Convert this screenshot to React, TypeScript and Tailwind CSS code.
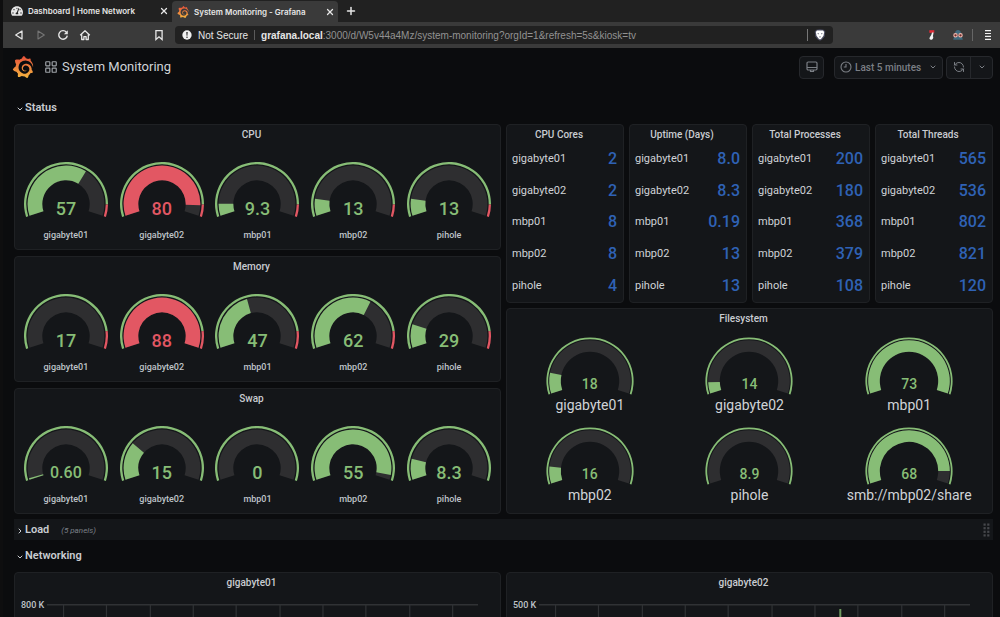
import React from "react";
import { ChevronDown, ChevronRight, LayoutGrid, Plus, RefreshCcw, X } from "lucide-react";
import { SiGrafana } from "react-icons/si";
import { FaTachometerAlt } from "react-icons/fa";

const GREEN = "#87bd76";
const RED = "#e25763";
const TRACK = "#2e2e30";

type GaugeItem = { name: string; value: string; fill: number; hot?: boolean };

const cpu: GaugeItem[] = [
  { name: "gigabyte01", value: "57", fill: 0.645 },
  { name: "gigabyte02", value: "80", fill: 0.925, hot: true },
  { name: "mbp01", value: "9.3", fill: 0.085 },
  { name: "mbp02", value: "13", fill: 0.12 },
  { name: "pihole", value: "13", fill: 0.12 },
];

const memory: GaugeItem[] = [
  { name: "gigabyte01", value: "17", fill: 0 },
  { name: "gigabyte02", value: "88", fill: 1, hot: true },
  { name: "mbp01", value: "47", fill: 0.43 },
  { name: "mbp02", value: "62", fill: 0.625 },
  { name: "pihole", value: "29", fill: 0.165 },
];

const swap: GaugeItem[] = [
  { name: "gigabyte01", value: "0.60", fill: 0.012 },
  { name: "gigabyte02", value: "15", fill: 0.27 },
  { name: "mbp01", value: "0", fill: 0 },
  { name: "mbp02", value: "55", fill: 0.965 },
  { name: "pihole", value: "8.3", fill: 0.148 },
];

const filesystem: GaugeItem[] = [
  { name: "gigabyte01", value: "18", fill: 0.138 },
  { name: "gigabyte02", value: "14", fill: 0.075 },
  { name: "mbp01", value: "73", fill: 1 },
  { name: "mbp02", value: "16", fill: 0.112 },
  { name: "pihole", value: "8.9", fill: 0 },
  { name: "smb://mbp02/share", value: "68", fill: 0.917 },
];

const hosts = ["gigabyte01", "gigabyte02", "mbp01", "mbp02", "pihole"];

const stats = [
  { title: "CPU Cores", values: ["2", "2", "8", "8", "4"] },
  { title: "Uptime (Days)", values: ["8.0", "8.3", "0.19", "13", "13"] },
  { title: "Total Processes", values: ["200", "180", "368", "379", "108"] },
  { title: "Total Threads", values: ["565", "536", "802", "821", "120"] },
];

function band(c: number, outer: number, inner: number, from: number, to: number) {
  const point = (r: number, t: number) => {
    const a = ((162 + 216 * t) * Math.PI) / 180;
    return `${(c + r * Math.cos(a)).toFixed(2)} ${(c + r * Math.sin(a)).toFixed(2)}`;
  };
  const large = (to - from) * 216 > 180 ? 1 : 0;
  return `M${point(outer, from)} A${outer} ${outer} 0 ${large} 1 ${point(outer, to)} L${point(inner, to)} A${inner} ${inner} 0 ${large} 0 ${point(inner, from)} Z`;
}

function Dial({ item, limit }: { item: GaugeItem; limit: number }) {
  return (
    <svg viewBox="0 0 84 56" className="col-start-1 row-start-1 h-14 w-21" aria-hidden="true">
      <path d={band(42, 42, 39.7, 0, limit)} fill={GREEN} />
      {limit < 1 && <path d={band(42, 42, 39.7, limit, 1)} fill={RED} />}
      <path d={band(42, 38.4, 23.7, 0, 1)} fill={TRACK} />
      {item.fill > 0 && <path d={band(42, 38.4, 23.7, 0, item.fill)} fill={item.hot ? RED : GREEN} />}
    </svg>
  );
}

function Panel({ title, className = "", children }: { title: string; className?: string; children: React.ReactNode }) {
  return (
    <section className={`flex min-w-0 flex-col rounded-sm border border-[#1f2124] bg-[#141619] ${className}`}>
      <h2 className="pt-px pr-3 text-center text-[10px] leading-[18px] font-medium text-[#c9ccd1]">{title}</h2>
      {children}
    </section>
  );
}

function GaugeRow({ title, items, limit }: { title: string; items: GaugeItem[]; limit: number }) {
  return (
    <Panel title={title} className="flex-1">
      <ul className="grid grid-cols-5 px-[3px] pt-[18px] pb-2">
        {items.map((item) => (
          <li key={item.name} className="flex flex-col items-center gap-[11px]">
            <div className="grid justify-items-center">
              <Dial item={item} limit={limit} />
              <span
                className={`col-start-1 row-start-1 self-end font-medium ${item.value.length > 3 ? "text-base/[18px]" : "text-lg/[18px]"} ${item.hot ? "text-[#e25763]" : "text-[#87bd76]"}`}
              >
                {item.value}
              </span>
            </div>
            <span className="text-[9px] leading-3 font-medium text-[#bfc3c8]">{item.name}</span>
          </li>
        ))}
      </ul>
    </Panel>
  );
}

function StatPanel({ title, values }: { title: string; values: string[] }) {
  return (
    <Panel title={title}>
      <dl className="-mt-px flex flex-1 flex-col pr-1.5 pl-[5px]">
        {hosts.map((host, i) => (
          <div key={host} className="flex flex-1 items-center justify-between">
            <dt className="text-[11px] leading-4 text-[#d0d3d7]">{host}</dt>
            <dd className="text-base leading-4 font-medium text-[#2f62b5]">{values[i]}</dd>
          </div>
        ))}
      </dl>
    </Panel>
  );
}

function Filesystem() {
  return (
    <Panel title="Filesystem">
      <ul className="grid grid-cols-3 gap-y-3.5 px-[3px] pt-[9px] pb-2.5">
        {filesystem.map((item) => (
          <li key={item.name} className="flex flex-col items-center gap-0.5">
            <div className="grid justify-items-center">
              <svg viewBox="0 0 88 58" className="col-start-1 row-start-1 h-[58px] w-[88px]" aria-hidden="true">
                <path d={band(44, 43.6, 41.8, 0, 1)} fill={GREEN} />
                <path d={band(44, 40.8, 29.2, 0, 1)} fill={TRACK} />
                {item.fill > 0 && <path d={band(44, 40.8, 29.2, 0, item.fill)} fill={GREEN} />}
              </svg>
              <span className="col-start-1 row-start-1 self-end pb-1 text-sm leading-none font-medium text-[#87bd76]">
                {item.value}
              </span>
            </div>
            <span className="text-sm leading-4 text-[#d0d3d7]">{item.name}</span>
          </li>
        ))}
      </ul>
    </Panel>
  );
}

function NetworkPanel({ title, top, spike }: { title: string; top: string; spike?: boolean }) {
  const lines = [16, 59, 103, 146, 189, 233, 276, 319, 363, 406];
  return (
    <Panel title={title}>
      <div className="flex pt-2 pr-[22px] pl-1.5">
        <span className="w-[26px] text-[9px] leading-[10px] font-medium text-[#bfc3c8]">{top}</span>
        <svg viewBox="0 0 432 120" preserveAspectRatio="none" className="mt-1 h-30 min-w-0 flex-1" aria-hidden="true">
          <rect width="432" height="1.5" fill="#303235" />
          {lines.map((x) => (
            <rect key={x} x={x} width="1.2" height="120" fill="#303235" />
          ))}
          {spike && <rect x="301" y="5" width="2" height="115" fill="#6f9a60" />}
        </svg>
      </div>
    </Panel>
  );
}

function RowTitle({ title, open, children }: { title: string; open: boolean; children?: React.ReactNode }) {
  const Chevron = open ? ChevronDown : ChevronRight;
  return (
    <div className={`flex h-[21px] items-center justify-between pr-[3px] pl-0.5 ${open ? "mb-1.5" : "mb-[5px] bg-[#141619]"}`}>
      <button type="button" aria-expanded={open} className="flex items-center gap-px pt-0.5 text-[11px] font-semibold text-[#c9ccd1]">
        <Chevron className="size-2" strokeWidth={3} />
        {title}
        {!open && <span className="ml-[11px] text-[8px] font-normal text-[#7b8087] italic">(5 panels)</span>}
      </button>
      {children}
    </div>
  );
}

function GrafanaMark({ className, id }: { className: string; id: string }) {
  return (
    <>
      <svg className="absolute size-0" aria-hidden="true">
        <linearGradient id={id} x1="0" y1="0" x2="0" y2="1">
          <stop offset="0" stopColor="#e8503a" />
          <stop offset="1" stopColor="#f4b53f" />
        </linearGradient>
      </svg>
      <SiGrafana className={className} fill={`url(#${id})`} />
    </>
  );
}

function BrowserChrome() {
  return (
    <header className="font-[Inter,sans-serif] text-[#e6e6e6]">
      <div className="flex h-[22px] bg-[#212121] text-[8px] font-semibold">
        <div className="flex w-[169px] items-center pr-[3px] pl-2">
          <FaTachometerAlt className="size-3" />
          <span className="ml-[5px] flex-1 whitespace-nowrap">Dashboard | Home Network</span>
          <button type="button" aria-label="Close Dashboard tab">
            <X className="size-2.5" strokeWidth={3} />
          </button>
        </div>
        <div className="mt-px flex w-[166px] items-center rounded-t bg-[#3a3a3a] pr-[3px] pl-[5px]">
          <GrafanaMark id="mark-tab" className="size-3" />
          <span className="ml-[5px] flex-1 whitespace-nowrap">System Monitoring - Grafana</span>
          <button type="button" aria-label="Close Grafana tab">
            <X className="size-2.5" strokeWidth={3} />
          </button>
        </div>
        <button type="button" aria-label="New tab" className="ml-[7px]">
          <Plus className="size-3" strokeWidth={3} />
        </button>
      </div>
      <div className="flex h-[26px] items-center bg-[#3a3a3a] pr-1.5 pl-2.5">
        <div className="flex gap-2.5">
          <button type="button" aria-label="Back">
            <svg viewBox="0 0 12 12" className="size-3" fill="none" stroke="#e6e6e6" strokeWidth="1.3" strokeLinejoin="round">
              <path d="M9 2v8L2.7 6z" />
            </svg>
          </button>
          <button type="button" aria-label="Forward">
            <svg viewBox="0 0 12 12" className="size-3" fill="none" stroke="#757575" strokeWidth="1.1" strokeLinejoin="round">
              <path d="M3 2v8l6.3-4z" />
            </svg>
          </button>
          <button type="button" aria-label="Reload">
            <svg viewBox="0 0 12 12" className="size-3" fill="none" stroke="#e6e6e6" strokeWidth="1.4">
              <path d="M9.4 3.2A4.3 4.3 0 1 0 10.3 6.6" />
              <path d="M10.8 1.3v3.9H6.9z" fill="#e6e6e6" stroke="none" />
            </svg>
          </button>
          <button type="button" aria-label="Home">
            <svg viewBox="0 0 12 12" className="size-3" fill="none" stroke="#e6e6e6" strokeWidth="1.3" strokeLinejoin="round">
              <path d="M1.2 6.3 6 1.8l4.8 4.5M2.7 5.6v4.9h2.2V7.6h2.2v2.9h2.2V5.6" />
            </svg>
          </button>
        </div>
        <button type="button" aria-label="Bookmark this page" className="ml-[62px]">
          <svg viewBox="0 0 12 12" className="size-3" fill="none" stroke="#e6e6e6" strokeWidth="1.3">
            <path d="M2.9 1.6h6.2v8.9L6 7.8l-3.1 2.7z" />
          </svg>
        </button>
        <div className="ml-2.5 flex h-[18px] min-w-0 flex-1 items-center rounded-sm bg-[#212121] pr-[7px] pl-[7px] font-['Liberation_Sans',sans-serif] text-[10px]">
          <svg viewBox="0 0 12 12" className="size-2.5" aria-hidden="true">
            <circle cx="6" cy="6" r="5.6" fill="#f0f0f0" />
            <path d="M5.2 2.5h1.6L6.5 7h-1z" fill="#212121" />
            <circle cx="6" cy="8.8" r=".9" fill="#212121" />
          </svg>
          <span className="ml-1.5 font-medium whitespace-nowrap">Not Secure</span>
          <span className="mx-1.5 h-2.5 w-px bg-[#5a5a5a]" />
          <label htmlFor="address" className="font-semibold">
            grafana.local
          </label>
          <input
            id="address"
            className="min-w-0 flex-1 bg-transparent text-[#929292] outline-none"
            defaultValue=":3000/d/W5v44a4Mz/system-monitoring?orgId=1&refresh=5s&kiosk=tv"
          />
          <span className="mx-1.5 h-3 w-px bg-[#777777]" />
          <svg viewBox="0 0 12 12" className="size-3" role="img" aria-label="Shields">
            <path d="M2.5.8 6 .2l3.5.6 1.8 1.8-.7 4.8-2.4 3L6 11.800l-2.200-1.400-2.400-3L.7 2.600z" fill="#4b4d61" />
            <path d="M3 1.500h6l1.200 1.600-.7 3.700L7.400 9.500 6 10.600 4.600 9.500 2.500 6.800 1.800 3.100z" fill="#fff" />
            <path d="M3.300 4l1.700.6-.6.9zM8.700 4 7 4.600l.6.9zM5.100 7.600h1.800L6 8.800z" fill="#4b4d61" />
          </svg>
        </div>
        <svg viewBox="0 0 12 12" className="ml-[93px] size-3" role="img" aria-label="Privacy extension">
          <path d="M3.300 1.200h5v2.600h-5z" fill="#e02a36" />
          <path d="M6 3.600h1.600L6.900 7.200c1 1.600-.2 3.500-1.800 3.500S2.900 9 4 7.900c.8-.8 1.500-2 2-4.300z" fill="#f4f4f4" />
        </svg>
        <svg viewBox="0 0 12 12" className="ml-3.5 size-3" role="img" aria-label="Incognito extension">
          <path d="M3 4.500C3 2.500 4.300 1 6 1s3 1.500 3 3.500L11 5H1zM2 8l4-1 4 1 .8 2.800H1.200z" fill="#3e6a7e" />
          <circle cx="3.500" cy="6.300" r="1.700" fill="#6d2a2a" stroke="#efb7ad" strokeWidth="1.100" />
          <circle cx="8.500" cy="6.300" r="1.700" fill="#6d2a2a" stroke="#efb7ad" strokeWidth="1.100" />
        </svg>
        <span className="ml-2 h-3 w-px bg-[#666666]" />
        <button type="button" aria-label="Browser menu" className="ml-[9px]">
          <svg viewBox="0 0 12 12" className="size-3" fill="#f0f0f0">
            <path d="M3 1h6v1.200H3zM3 3.900h6v1.200H3zM3 6.800h6V8H3zM3 9.700h6v1.200H3z" />
          </svg>
        </button>
      </div>
    </header>
  );
}

function DashboardHeader() {
  return (
    <div className="mb-[11px] -ml-0.5 flex h-[38px] items-center justify-between text-[#7b7f85]">
      <div className="flex items-center">
        <GrafanaMark id="mark-header" className="size-[22px]" />
        <LayoutGrid className="ml-2.5 size-3.5 text-[#9fa3a8]" strokeWidth={2} />
        <h1 className="ml-1 text-[13px] text-[#d0d3d7]">System Monitoring</h1>
      </div>
      <div className="flex h-[23px] text-[10px] font-semibold">
        <button type="button" aria-label="Cycle view mode" className="flex w-[25px] items-center justify-center rounded-sm border border-[#26282c] bg-[#141619]">
          <svg viewBox="0 0 12 12" className="size-3" fill="none" stroke="currentColor" strokeWidth="1.200">
            <rect x="1" y="1" width="10" height="8" rx="1.200" />
            <path d="M1 6.500h10M4.500 9v1.500h3V9" />
          </svg>
        </button>
        <button type="button" className="ml-2.5 flex w-[109px] items-center rounded-sm border border-[#26282c] bg-[#141619] px-[5px]">
          <svg viewBox="0 0 12 12" className="size-3" fill="none" stroke="currentColor" strokeWidth="1.100">
            <circle cx="6" cy="6" r="5" />
            <path d="M6 3v3H3.800" />
          </svg>
          <span className="ml-[3px] flex-1 text-left font-medium whitespace-nowrap">Last 5 minutes</span>
          <ChevronDown className="size-2" strokeWidth={3} />
        </button>
        <div className="ml-[3px] flex rounded-sm border border-[#26282c] bg-[#141619]">
          <button type="button" aria-label="Refresh dashboard" className="flex w-6 items-center justify-center border-r border-[#26282c]">
            <RefreshCcw className="size-3" strokeWidth={2} />
          </button>
          <button type="button" aria-label="Refresh interval" className="flex w-[21px] items-center justify-center">
            <ChevronDown className="size-2" strokeWidth={3} />
          </button>
        </div>
      </div>
    </div>
  );
}

export default function App() {
  return (
    <div className="h-screen overflow-hidden border-l-[3px] border-[#0e0e0f] bg-[#0b0c0e] font-[Roboto,sans-serif]">
      <BrowserChrome />
      <main className="pr-[7px] pl-[11px]">
        <DashboardHeader />
        <RowTitle title="Status" open />
        <div className="mb-[5px] grid grid-cols-2 gap-[5px]">
          <div className="flex flex-col gap-1.5">
            <GaugeRow title="CPU" items={cpu} limit={0.92} />
            <GaugeRow title="Memory" items={memory} limit={0.885} />
            <GaugeRow title="Swap" items={swap} limit={1} />
          </div>
          <div className="flex flex-col gap-[5px]">
            <div className="grid flex-1 grid-cols-4 gap-[5px]">
              {stats.map((s) => (
                <StatPanel key={s.title} title={s.title} values={s.values} />
              ))}
            </div>
            <Filesystem />
          </div>
        </div>
        <RowTitle title="Load" open={false}>
          <svg viewBox="0 0 7 14" className="h-3.5 w-[7px]" fill="#46484c" aria-hidden="true">
            {[0, 1, 2, 3].map((i) => (
              <g key={i}>
                <rect x="0.500" y={0.5 + i * 3.6} width="2.200" height="2.200" />
                <rect x="4.200" y={0.5 + i * 3.6} width="2.200" height="2.200" />
              </g>
            ))}
          </svg>
        </RowTitle>
        <RowTitle title="Networking" open />
        <div className="grid grid-cols-2 gap-[5px]">
          <NetworkPanel title="gigabyte01" top="800 K" />
          <NetworkPanel title="gigabyte02" top="500 K" spike />
        </div>
      </main>
    </div>
  );
}
